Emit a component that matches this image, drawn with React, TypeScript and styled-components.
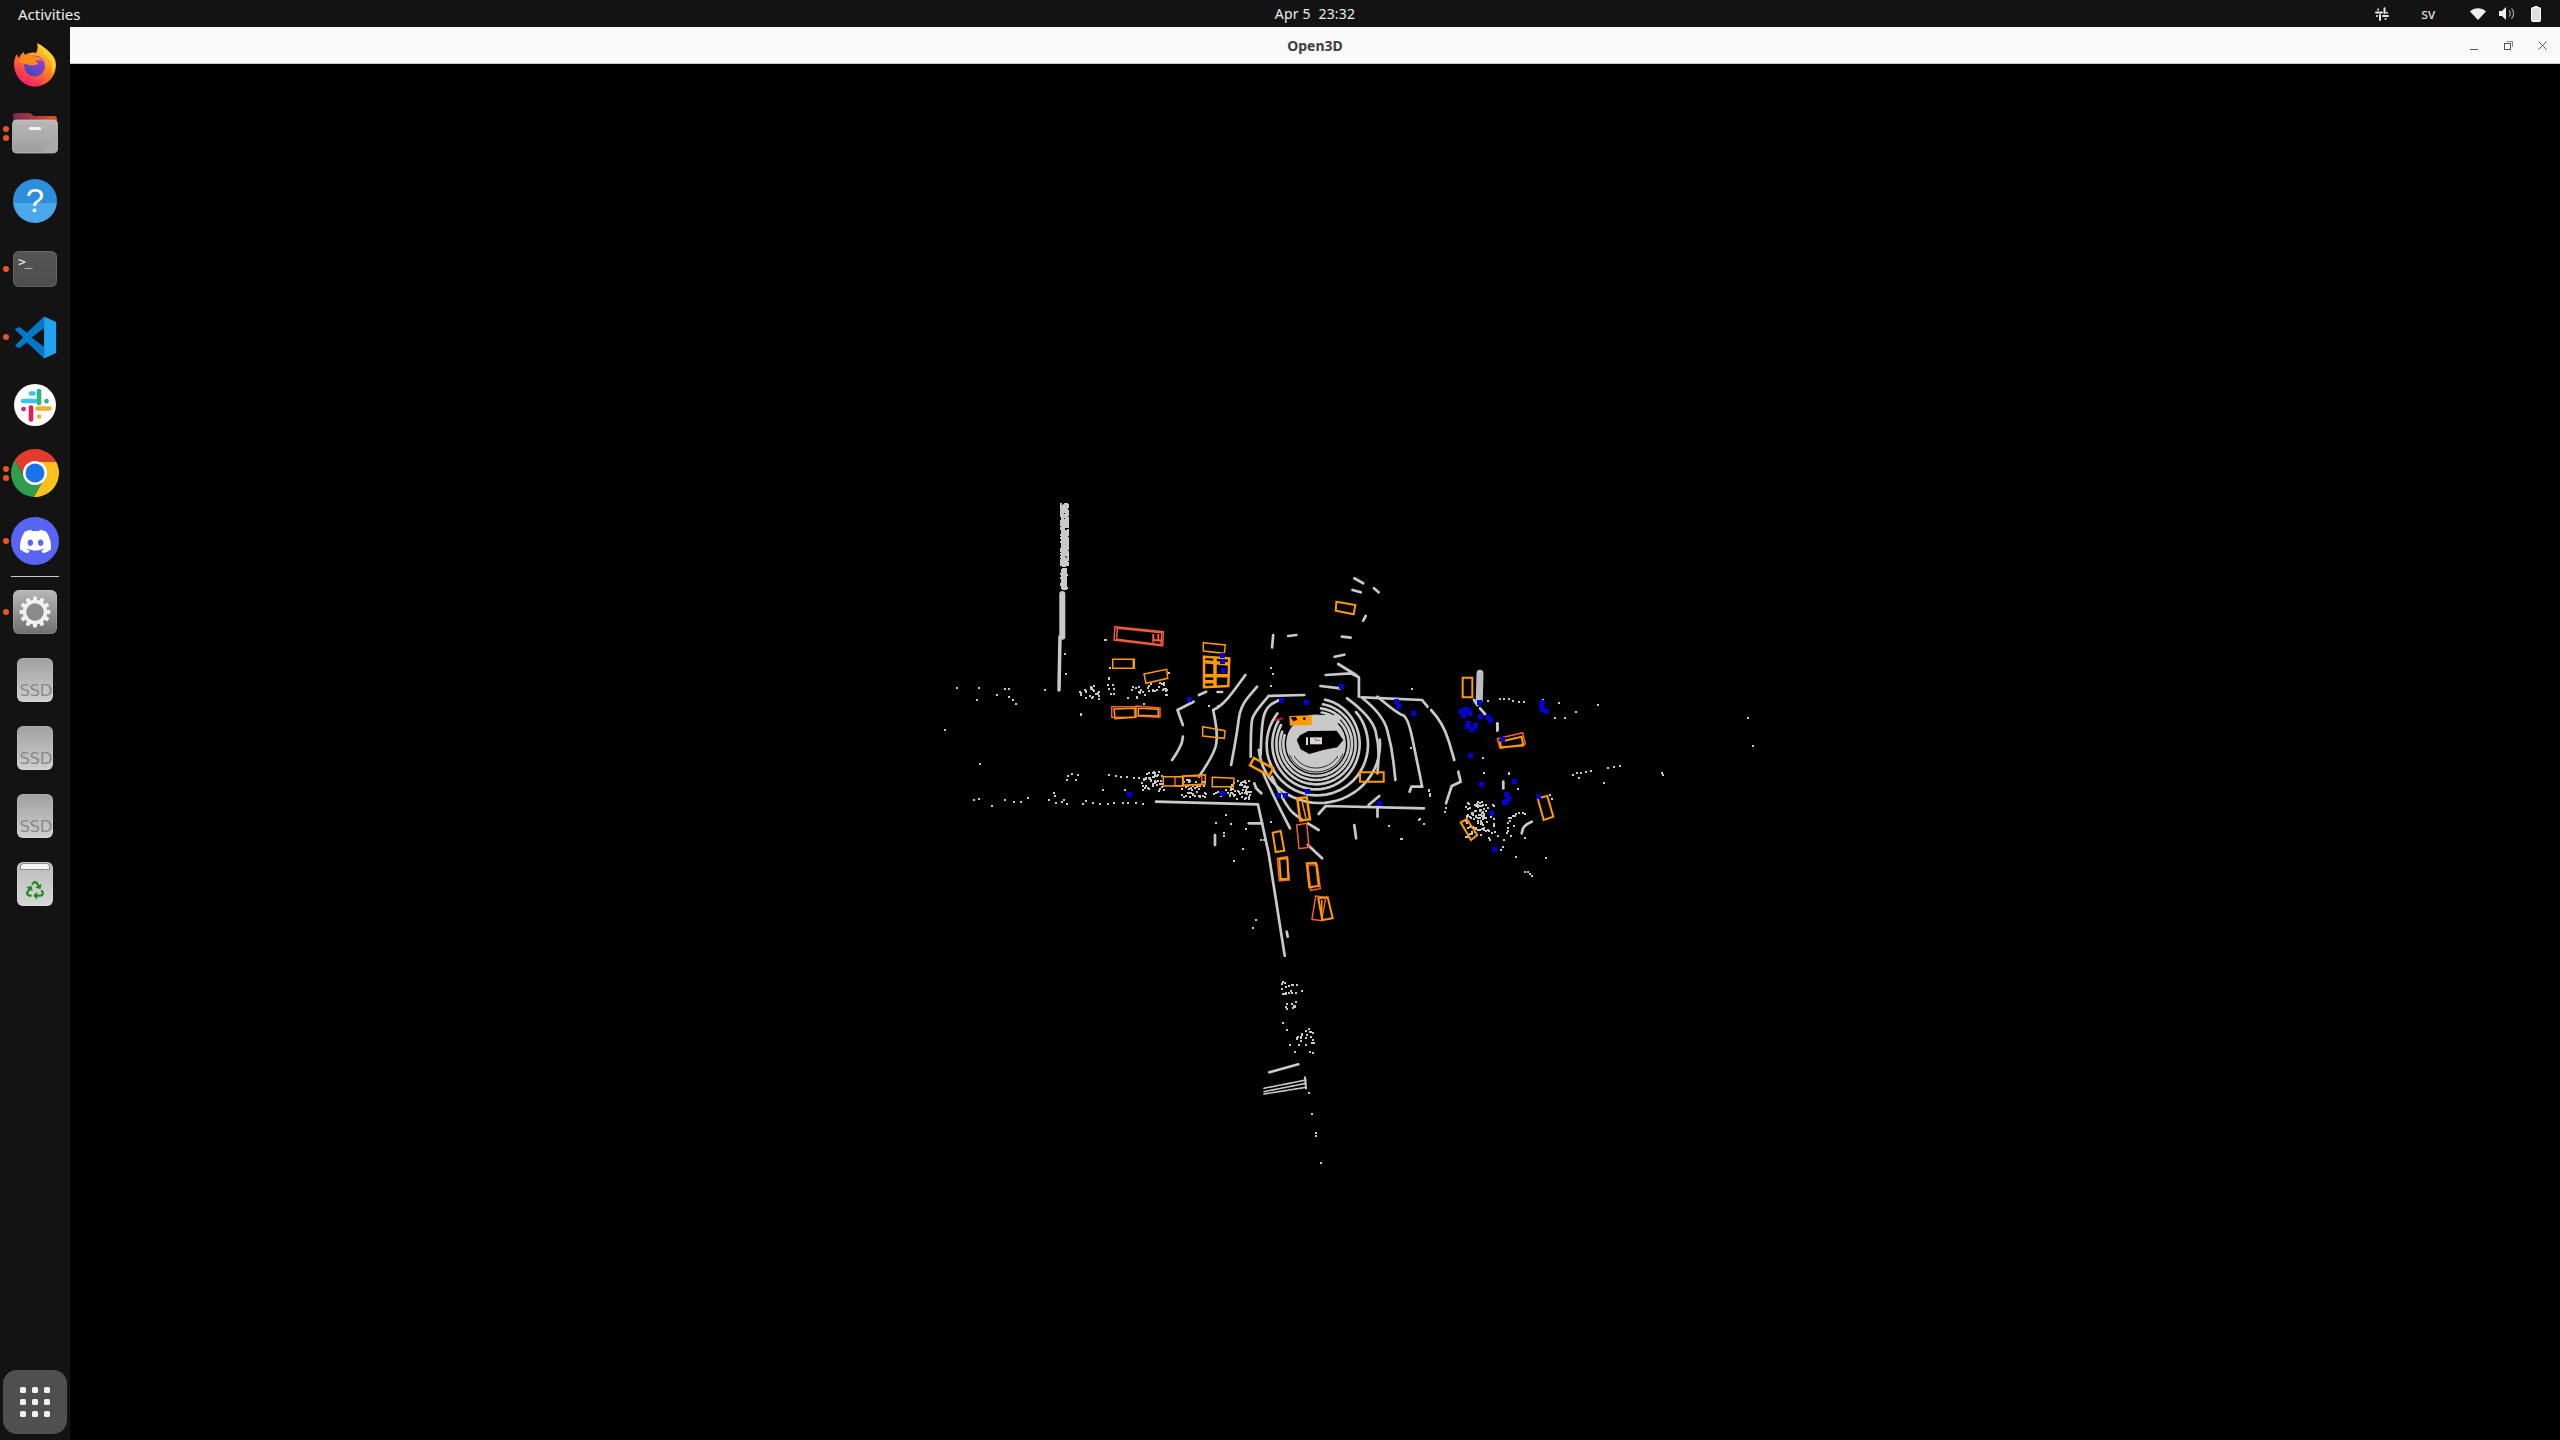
import React from "react";
import styled, { createGlobalStyle } from "styled-components";
import { SiDiscord } from "react-icons/si";
import { FaRecycle } from "react-icons/fa";

const Global = createGlobalStyle`
  html, body { margin: 0; padding: 0; background: #000; overflow: hidden; }
  #root { width: 100vw; height: 100vh; }
`;

const Root = styled.div`
  width: 100%; height: 100%;
  display: flex; flex-direction: column;
  background: #000;
`;
const TopBar = styled.header`
  flex: 0 0 27px; height: 27px;
  display: grid; grid-template-columns: 340px 1fr 270px; align-items: center;
  background: #131313; color: #eeeeec;
  font: 400 14px/26px "Noto Sans", sans-serif;
`;
const Activities = styled.span`
  padding-left: 18px; font-size: 15px;
`;
const Clock = styled.span`
  text-align: center; white-space: pre; letter-spacing: 0.2px;
`;
const Tray = styled.div`
  display: flex; align-items: center; justify-content: flex-end; padding-right: 19px;
`;
const TrayItem = styled.span<{ $gap: number }>`
  margin-left: ${(p) => p.$gap}px;
  display: flex; align-items: center;
  font-size: 14px;
`;
const Main = styled.div`
  flex: 1; display: flex; min-height: 0;
`;
const Dock = styled.nav`
  flex: 0 0 70px; width: 70px; background: #131313;
  display: flex; flex-direction: column; padding: 4px 0 6px; box-sizing: border-box;
`;
const DockItem = styled.div`
  position: relative; flex: 0 0 68px; height: 68px;
  display: flex; align-items: center; justify-content: center;
`;
const RunDots = styled.div`
  position: absolute; left: 3px; top: 0; bottom: 0;
  display: flex; flex-direction: column; justify-content: center; gap: 3px;
`;
const RunDot = styled.i`
  display: block; width: 6px; height: 6px; border-radius: 50%; background: #e95420;
`;
const Separator = styled.hr`
  flex: 0 0 1px; margin: 1px 11px 1px; height: 1px; width: 48px; border: 0; padding: 0;
  background: #c9c9c9;
`;
const Tile = styled.div<{ $w: number; $h: number; $from: string; $to: string }>`
  position: relative; width: ${(p) => p.$w}px; height: ${(p) => p.$h}px;
  border-radius: 6px; box-sizing: border-box;
  background: linear-gradient(${(p) => p.$from}, ${(p) => p.$to});
  box-shadow: inset 0 0 0 1px rgba(255,255,255,.12);
`;
const GearTile = styled(Tile)`
  display: flex; align-items: center; justify-content: center;
`;
const SsdTile = styled(Tile)`
  display: flex; align-items: flex-end; justify-content: flex-end;
  padding: 0 1px 1px 0;
`;
const SsdText = styled.span`
  font: 400 16.5px/20px "DejaVu Sans", sans-serif; color: #8a8a8a; letter-spacing: -.4px;
`;
const TrashTile = styled(Tile)`
  display: flex; align-items: flex-end; justify-content: center; padding-bottom: 7px;
  color: #238a23;
`;
const TrashSlot = styled.i`
  position: absolute; left: 4px; right: 4px; top: 2px; height: 5px;
  background: #f4f4f4; border-radius: 3px 3px 0 0;
  box-shadow: 0 0 0 1px #8d8d8d;
`;
const TerminalTile = styled(Tile)`
  color: #eee; font: 400 13px/13px "DejaVu Sans Mono", monospace;
  padding: 4px 0 0 5px; letter-spacing: -1px;
`;
const HelpCircle = styled.div`
  width: 44px; height: 44px; border-radius: 50%;
  background: linear-gradient(#2d8edb 0 54%, #4aa8ea 54% 100%);
  color: #fff; font: 400 33px/44px "Liberation Sans", sans-serif; text-align: center;
`;
const DiscordCircle = styled.div`
  width: 48px; height: 48px; border-radius: 50%; background: #5865f2; color: #fff;
  display: flex; align-items: center; justify-content: center;
`;
const GridButtonWrap = styled.div`
  margin-top: auto; display: flex; justify-content: center;
`;
const GridButton = styled.div`
  width: 64px; height: 64px; border-radius: 14px; background: #4f4f4f;
  display: grid; grid-template-columns: repeat(3, 6px); grid-auto-rows: 6px; gap: 6px;
  justify-content: center; align-content: center;
`;
const GridDot = styled.i`
  display: block; background: #f2f2f2; border-radius: 1.5px;
`;
const Window = styled.section`
  flex: 1; min-width: 0; display: flex; flex-direction: column; background: #000;
`;
const TitleBar = styled.div`
  flex: 0 0 37px; height: 37px; box-sizing: border-box;
  background: #fafafa; border-bottom: 1px solid #cfcfcf;
  display: grid; grid-template-columns: 1fr auto 1fr; align-items: center;
`;
const Title = styled.span`
  font: 700 14px "Noto Sans", sans-serif; color: #3d3d3d;
`;
const Controls = styled.div`
  display: flex; justify-content: flex-end; padding-right: 1px;
`;
const ControlButton = styled.span`
  width: 34px; height: 36px; display: flex; align-items: center; justify-content: center;
  color: #555;
`;
const Viewer = styled.div`
  flex: 1; min-height: 0; background: #000;
`;
const CloudSvg = styled.svg`
  display: block; width: 100%; height: 100%;
`;

/* ---------- icons ---------- */
const Firefox = () => (
  <svg width="44" height="44" viewBox="0 0 44 44">
    <defs>
      <linearGradient id="ffa" x1="0.8" y1="0" x2="0.2" y2="1">
        <stop offset="0" stopColor="#ffe13a" />
        <stop offset=".45" stopColor="#ff8a1c" />
        <stop offset=".8" stopColor="#ff3750" />
        <stop offset="1" stopColor="#f0148c" />
      </linearGradient>
      <linearGradient id="ffb" x1="0.7" y1="0" x2="0.3" y2="1">
        <stop offset="0" stopColor="#a23de0" />
        <stop offset="1" stopColor="#3f49b8" />
      </linearGradient>
    </defs>
    <path d="M1 21c0-4 1-7 3-10 .3 2 1 3 2 4 1-3 3-5 5-6 0 1 .3 2 1 3 3-2 7-3 11-2C25 7 25 3 24 0c5 3 8 5 12 9 4 3 7 7 7 13 0 12-9.500 21.500-21 21.500S1 33 1 21z" fill="url(#ffa)" />
    <path d="M26 1c5 3 12 8 15 15 2 5 1 11-2 15 1-6 0-12-5-17-3-3-7-8-8-13z" fill="#ffcf2e" />
    <circle cx="21.500" cy="23" r="10.500" fill="url(#ffb)" />
    <path d="M6 18c3-4 8-6 13-5 5 0 9 2 11 5-3-1-6-1-8 0 2 1 3 2 3 3-3 2-7 1-9 1-3-1-5-2-7-2-1 0-2-1-3-2z" fill="#ff8a1c" />
  </svg>
);
const Folder = () => (
  <svg width="46" height="42" viewBox="0 0 46 42">
    <defs>
      <linearGradient id="fdt" x1="0" y1="0" x2="1" y2="0">
        <stop offset="0" stopColor="#77294f" />
        <stop offset="1" stopColor="#e2501f" />
      </linearGradient>
      <linearGradient id="fdb" x1="0" y1="0" x2="0" y2="1">
        <stop offset="0" stopColor="#b8b8b8" />
        <stop offset="1" stopColor="#9e9e9e" />
      </linearGradient>
    </defs>
    <path d="M1 4a3 3 0 0 1 3-3h14l4 3h20a3 3 0 0 1 3 3v14H1z" fill="url(#fdt)" />
    <rect x="0.500" y="8" width="45" height="33" rx="4" fill="url(#fdb)" stroke="#cfcfcf" strokeWidth=".7" />
    <path d="M45 26v11a4 4 0 0 1-4 4H28z" fill="#aaa" />
    <rect x="17" y="15" width="12" height="3" rx="1" fill="#f2f2f2" />
  </svg>
);
const VSCode = () => (
  <svg width="43" height="43" viewBox="0 0 100 100">
    <path d="M70 1 98 14V86L70 99Z" fill="#23a2f1" />
    <path d="M70 1 30 39 12 25 2 31 21 50 2 69 12 75 30 61 70 99V72L41 50 70 28Z" fill="#0079c6" />
  </svg>
);
const Slack = () => (
  <svg width="42" height="42" viewBox="0 0 42 42">
    <circle cx="21" cy="21" r="21" fill="#fff" />
    <g strokeWidth="4.600" strokeLinecap="round" fill="none">
      <path d="M9 17h12" stroke="#36c5f0" />
      <path d="M17 9.500h2.500" stroke="#36c5f0" />
      <path d="M25 7v12" stroke="#2eb67d" />
      <path d="M32.500 17v.2" stroke="#2eb67d" />
      <path d="M17 23.500v12" stroke="#e01e5a" />
      <path d="M9.500 25h.1" stroke="#e01e5a" />
      <path d="M23.500 24.500h12" stroke="#ecb22e" />
      <path d="M25 32.500h.1" stroke="#ecb22e" />
    </g>
  </svg>
);
const Chrome = () => (
  <svg width="48" height="48" viewBox="0 0 48 48">
    <path d="M24 13H45.300A24 24 0 0 0 3.820 11.050L14.470 29.500Z" fill="#e33b2e" />
    <path d="M14.470 29.500 3.820 11.050A24 24 0 0 0 22.880 47.950L33.530 29.500Z" fill="#2f9e4c" />
    <path d="M33.530 29.500 22.880 47.950A24 24 0 0 0 45.300 13H24Z" fill="#fcc11c" />
    <circle cx="24" cy="24" r="12" fill="#fff" />
    <circle cx="24" cy="24" r="9.500" fill="#1a73e8" />
  </svg>
);
const Gear = () => (
  <svg width="32" height="32" viewBox="0 0 32 32">
    {Array.from({ length: 12 }, (_, i) => (
      <rect key={i} x="14" y="0.500" width="4" height="6" rx="1" fill="#f1f1ef" transform={`rotate(${i * 30} 16 16)`} />
    ))}
    <circle cx="16" cy="16" r="10.500" fill="#8b8b8b" stroke="#f1f1ef" strokeWidth="3.600" />
  </svg>
);
const TraySlack = () => (
  <svg width="14" height="14" viewBox="0 0 14 14" fill="none" stroke="#e8e8e8" strokeWidth="2" strokeLinecap="round">
    <path d="M1 5.500h6M9.500 1.200v5M8 9h5M5 8v5M11.800 5.800h.1M3 2.500h.1M2 9h.1M10.500 12h.1" />
  </svg>
);
const Wifi = () => (
  <svg width="16" height="12" viewBox="0 0 16 12"><path d="M0 3.500C4.500-.8 11.500-.8 16 3.500L8 12Z" fill="#f0f0f0" /></svg>
);
const Volume = () => (
  <svg width="15" height="13" viewBox="0 0 15 13">
    <path d="M0 4h3l4-4v13L3 9H0Z" fill="#eee" />
    <path d="M10 3.500a4 4 0 0 1 0 6M12.500 1.500a7 7 0 0 1 0 10" fill="none" stroke="#aaa" strokeWidth="1.100" />
  </svg>
);
const Battery = () => (
  <svg width="10" height="16" viewBox="0 0 10 16">
    <rect x="3" y="0" width="4" height="2" fill="#eee" />
    <rect x="0.600" y="1.600" width="8.800" height="13.800" rx="1.500" fill="#ddd" stroke="#fff" strokeWidth="1.100" />
  </svg>
);

/* ---------- point cloud data: each block is read in the pixel frame of a crop ---------- */
type Frame = { ox: number; oy: number; sx: number; sy: number };
const Z4: Frame = { ox: 1040, oy: 560, sx: 2.8, sy: 3 };
const Z5: Frame = { ox: 900, oy: 480, sx: 3, sy: 3 };
const Z6: Frame = { ox: 1400, oy: 640, sx: 3, sy: 3 };
const Z7: Frame = { ox: 1180, oy: 780, sx: 3, sy: 3 };
const Z9: Frame = { ox: 1240, oy: 660, sx: 3, sy: 3 };

const mapPts = (f: Frame, n: number[]) => {
  const out: [number, number][] = [];
  for (let i = 0; i < n.length; i += 2) out.push([f.ox + n[i] / f.sx, f.oy + n[i + 1] / f.sy]);
  return out;
};
const poly = (f: Frame, n: number[], close = false) =>
  mapPts(f, n).map(([x, y], i) => `${i ? "L" : "M"}${x.toFixed(1)} ${y.toFixed(1)}`).join("") + (close ? "Z" : "");
const curve = (f: Frame, n: number[]) => {
  const p = mapPts(f, n);
  let d = `M${p[0][0].toFixed(1)} ${p[0][1].toFixed(1)}`;
  for (let i = 1; i < p.length - 1; i++) {
    const mx = (p[i][0] + p[i + 1][0]) / 2;
    const my = (p[i][1] + p[i + 1][1]) / 2;
    d += `Q${p[i][0].toFixed(1)} ${p[i][1].toFixed(1)} ${mx.toFixed(1)} ${my.toFixed(1)}`;
  }
  const l = p[p.length - 1];
  return d + `L${l[0].toFixed(1)} ${l[1].toFixed(1)}`;
};
const squares = (f: Frame, n: number[], s: number) =>
  mapPts(f, n).map(([x, y]) => `M${Math.round(x - s / 2)} ${Math.round(y - s / 2)}h${s}v${s}h-${s}z`).join("");

const arc = (cx: number, cy: number, rx: number, ry: number, a0: number, a1: number) => {
  const n: number[] = [];
  for (let a = a0; a <= a1; a += 6) {
    const t = (a * Math.PI) / 180;
    n.push(cx + rx * Math.cos(t), cy + ry * Math.sin(t));
  }
  return n;
};

let seed = 41;
const rnd = () => {
  seed = (seed * 16807) % 2147483647;
  return seed / 2147483647;
};
const cluster = (x0: number, y0: number, x1: number, y1: number, count: number) => {
  const n: number[] = [];
  for (let i = 0; i < count; i++) n.push(x0 + rnd() * (x1 - x0), y0 + rnd() * (y1 - y0));
  return n;
};

const thick25 = [
  curve(Z4, [535, 615, 552, 520, 560, 440, 608, 380]),
  curve(Z4, [590, 590, 590, 490, 600, 460, 640, 408]),
  poly(Z4, [640, 408, 740, 405]),
  curve(Z4, [618, 585, 620, 490, 635, 440, 670, 420]),
  curve(Z4, [445, 650, 490, 580, 497, 520, 485, 450]),
  curve(Z4, [485, 450, 510, 440, 575, 345]),
  curve(Z4, [370, 600, 395, 560, 400, 530]),
  poly(Z4, [400, 495, 385, 450, 430, 425]),
  poly(Z4, [445, 405, 465, 395]), poly(Z4, [497, 396, 510, 396]),
  poly(Z4, [600, 670, 605, 685, 620, 700]),
  curve(Z4, [625, 640, 650, 700, 700, 805]),
  curve(Z4, [650, 650, 690, 745, 735, 780]),
  poly(Z4, [585, 790, 622, 790]),
  poly(Z4, [490, 825, 490, 855]),
  poly(Z4, [750, 790, 780, 810]),
  poly(Z4, [750, 855, 790, 895]),
  poly(Z4, [880, 795, 885, 835]),
  poly(Z4, [650, 262, 653, 225]),
  poly(Z4, [695, 228, 718, 225]),
  poly(Z4, [825, 290, 852, 284]),
  poly(Z4, [880, 55, 905, 70]), poly(Z4, [875, 90, 898, 97]), poly(Z4, [935, 85, 948, 97]),
  poly(Z4, [845, 230, 870, 233]), poly(Z4, [905, 182, 912, 168]),
  curve(Z4, [945, 410, 1000, 460, 1030, 470, 1055, 600, 1070, 680]),
  poly(Z4, [1070, 680, 1040, 680, 1035, 695]),
  curve(Z4, [900, 412, 960, 462, 985, 560, 995, 660]),
  curve(Z4, [860, 415, 930, 470, 950, 560, 945, 640]),
  curve(Z4, [1095, 450, 1130, 490, 1160, 600]),
  poly(Z4, [905, 412, 1070, 420, 1085, 440]),
  poly(Z4, [780, 762, 800, 738, 1075, 745]),
  poly(Z4, [945, 740, 945, 770]),
  poly(Z4, [920, 735, 950, 708]),
  poly(Z4, [325, 725, 610, 733, 640, 880, 685, 1185]),
  poly(Z4, [800, 345, 870, 340, 893, 352, 893, 410]),
  poly(Z4, [785, 378, 840, 385]),
  poly(Z4, [835, 312, 885, 345]),
  poly(Z6, [175, 395, 182, 425, 155, 438, 138, 490]),
  poly(Z6, [310, 425, 310, 445]),
  curve(Z6, [395, 545, 372, 555, 365, 580]),
  poly(Z6, [240, 205, 255, 222]),
  poly(Z6, [222, 180, 232, 195]),
  poly(Z6, [292, 250, 292, 272]),
  poly(Z7, [268, 877, 355, 853]),
  poly(Z7, [320, 455, 323, 470]),
];
const rings = [
  arc(228, 252, 98, 96, -80, 200),
  arc(228, 252, 108, 108, -82, 205),
  arc(228, 252, 119, 121, -80, 210),
  arc(228, 252, 131, 136, -78, 214),
  arc(232, 254, 152, 152, -40, 218),
  arc(238, 254, 182, 175, -5, 175),
];
const ringPaths = rings.map((r) => poly(Z9, r));

const hairlines = [
  arc(228, 252, 86, 84, 20, 160),
  arc(228, 252, 76, 72, 30, 150),
].map((r) => poly(Z9, r));

const hole = poly(Z9, [170, 240, 180, 226, 205, 213, 290, 212, 310, 240, 292, 262, 250, 270, 208, 282, 182, 268], true);

const greyDots = [
  ...mapPts(Z5, [
    218, 957, 233, 955, 272, 975, 312, 958, 338, 963, 360, 963, 380, 952, 445, 958, 460, 935, 462, 945, 465, 965, 483, 963, 490, 958, 497, 968,
    545, 968, 555, 960, 575, 965, 597, 968, 620, 968, 640, 965, 665, 965, 680, 965, 705, 965, 725, 970,
    500, 885, 497, 897, 513, 878, 530, 882, 525, 897, 625, 883, 645, 886, 660, 887, 678, 887, 700, 890, 715, 890, 605, 927, 673, 927,
    237, 849, 131, 746, 540, 701, 169, 620, 234, 622, 311, 624, 325, 624, 287, 643, 323, 648, 227, 658, 335, 658, 344, 668, 431, 628,
    613, 476, 627, 560, 625, 595, 495, 578, 493, 520, 729, 670, 680, 652, 805, 577, 622, 612, 635, 612, 625, 625, 638, 625, 630, 638, 640, 638,
    925, 675, 950, 675, 1110, 560, 1115, 578, 1110, 615,
  ]),
  ...mapPts(Z5, cluster(480, 70, 502, 255, 520)),
  ...mapPts(Z5, cluster(481, 264, 497, 325, 130)),
  ...mapPts(Z5, cluster(530, 615, 595, 655, 22)),
  ...mapPts(Z5, cluster(690, 615, 745, 650, 16)),
  ...mapPts(Z5, cluster(750, 600, 800, 645, 18)),
  ...mapPts(Z5, cluster(722, 872, 785, 930, 50)),
  ...mapPts(Z5, cluster(845, 895, 910, 948, 36)),
  ...mapPts(Z5, cluster(985, 900, 1050, 955, 48)),
  ...mapPts(Z5, cluster(760, 925, 1000, 950, 18)),
  ...mapPts(Z6, [
    32, 145, 297, 174, 310, 175, 323, 175, 337, 180, 353, 184, 369, 184, 427, 177, 475, 185, 591, 192, 525, 214, 462, 230, 493, 232,
    1042, 232, 1056, 315, 246, 352, 250, 395, 324, 398, 352, 443, 516, 403, 528, 397, 541, 397, 555, 393, 571, 391, 535, 410, 610, 425, 620, 381, 638, 378, 656, 374,
    784, 397, 786, 402, 85, 448, 88, 464, 448, 462, 452, 475, 55, 538, 68, 550, 133, 513, 135, 500, 282, 572, 290, 584, 308, 596, 306, 618, 300, 627, 344, 647, 434, 652, 372, 590,
    372, 693, 380, 693, 388, 698, 392, 706, 292, 258, 262, 180,
  ]),
  ...mapPts(Z6, cluster(195, 480, 250, 590, 80)),
  ...mapPts(Z6, cluster(240, 490, 285, 600, 20)),
  ...mapPts(Z6, [318, 575, 320, 560, 322, 545, 325, 532, 335, 525, 345, 520, 355, 515, 365, 515, 372, 520, 330, 585, 338, 555, 326, 540, 330, 530, 342, 525, 320, 570]),
  ...mapPts(Z7, [
    105, 125, 135, 102, 150, 130, 130, 155, 128, 165, 187, 203, 195, 145, 160, 240, 270, 122, 240, 178, 248, 178, 226, 418, 216, 441, 312, 524,
    520, 136, 625, 135, 660, 175, 714, 118, 730, 130, 745, 28, 747, 44,
    305, 725, 318, 747, 328, 793, 343, 813, 355, 793, 376, 793, 392, 785, 392, 1000, 405, 1055, 405, 1065, 420, 1145, 384, 935, 386, 812, 396, 815,
  ]),
  ...mapPts(Z7, cluster(298, 603, 365, 640, 18)),
  ...mapPts(Z7, cluster(295, 640, 350, 692, 10)),
  ...mapPts(Z7, cluster(345, 745, 400, 785, 18)),
  ...mapPts(Z4, [11, 388, 113, 460, 181, 236, 193, 321, 190, 352, 1040, 385, 1035, 560, 1085, 690, 1090, 700, 1060, 775, 1072, 790, 975, 795, 1010, 835, 1280, 505, 1240, 635, 1310, 637, 1280, 490]),
];
const greyDotPath = greyDots.map(([x, y]) => `M${Math.round(x)} ${Math.round(y)}h2v2h-2z`).join("");

const orange = [
  [Z5, [638, 538, 703, 538, 703, 565, 638, 565]],
  [Z5, [732, 582, 800, 568, 803, 595, 738, 610]],
  [Z5, [910, 488, 976, 495, 973, 520, 910, 513]],
  [Z5, [642, 687, 705, 685, 705, 712, 645, 716]],
  [Z5, [715, 685, 775, 688, 775, 708, 715, 706]],
  [Z5, [908, 740, 975, 752, 973, 775, 908, 768]],
  [Z5, [790, 890, 850, 890, 850, 918, 790, 918]],
  [Z5, [848, 888, 916, 884, 916, 912, 848, 916]],
  [Z5, [937, 892, 1002, 895, 1000, 920, 937, 920]],
  [Z5, [912, 530, 988, 535, 985, 618, 912, 622]],
  [Z5, [1062, 834, 1120, 865, 1108, 887, 1050, 856]],
  [Z9, [360, 337, 431, 337, 431, 365, 360, 365]],
  [Z9, [172, 415, 200, 412, 210, 478, 181, 482]],
  [Z7, [278, 158, 302, 153, 313, 212, 287, 216]],
  [Z7, [298, 237, 322, 235, 325, 296, 302, 298]],
  [Z7, [380, 250, 408, 248, 416, 318, 388, 322]],
  [Z7, [415, 355, 443, 352, 458, 415, 427, 420]],
  [Z6, [188, 113, 217, 113, 217, 172, 188, 172]],
  [Z6, [300, 305, 365, 290, 370, 317, 303, 322]],
  [Z6, [413, 475, 442, 468, 460, 530, 431, 540]],
  [Z6, [182, 547, 200, 537, 232, 585, 213, 600]],
  [Z4, [830, 125, 883, 135, 878, 163, 828, 152]],
] as [Frame, number[]][];
const red = [
  [Z5, [645, 440, 790, 455, 788, 498, 642, 480]],
  [Z5, [652, 445, 785, 458, 783, 494, 650, 478]],
  [Z5, [635, 680, 708, 680, 708, 712, 635, 712]],
  [Z5, [708, 678, 780, 684, 780, 712, 708, 708]],
  [Z5, [825, 890, 905, 888, 905, 915, 825, 918]],
  [Z7, [350, 135, 380, 130, 387, 202, 357, 206]],
  [Z7, [292, 235, 322, 230, 328, 300, 298, 303]],
  [Z7, [384, 255, 412, 255, 421, 326, 392, 331]],
  [Z7, [407, 348, 437, 352, 425, 422, 396, 418]],
  [Z6, [292, 296, 368, 278, 376, 312, 300, 325]],
] as [Frame, number[]][];
const orangeLines = [
  poly(Z5, [945, 535, 945, 620]),
  poly(Z5, [915, 545, 985, 552]),
  poly(Z5, [915, 587, 985, 587]),
  poly(Z5, [915, 605, 945, 605]),
  poly(Z5, [700, 540, 700, 563]),
  poly(Z7, [365, 60, 378, 115]),
  poly(Z7, [425, 360, 425, 418]),
];
const redLines = [
  poly(Z5, [760, 462, 760, 488]),
  poly(Z5, [760, 480, 785, 482]),
  poly(Z5, [775, 462, 775, 480]),
];
const blue = squares(Z6, [
  185, 215, 195, 208, 205, 212, 190, 225, 208, 220, 205, 250, 225, 257, 218, 267, 202, 258, 240, 230, 265, 232, 272, 242,
  427, 187, 425, 195, 428, 207, 440, 215, 210, 347, 308, 298, 243, 433, 342, 424, 318, 462, 325, 475, 320, 483, 312, 488, 415, 470, 273, 520, 284, 627, 237, 187,
], 5) + squares(Z4, [
  418, 418, 675, 420, 745, 428, 997, 425, 1005, 438, 1045, 460, 750, 695, 668, 705, 687, 707, 510, 700, 250, 702, 950, 730,
  512, 305, 515, 330, 512, 285, 843, 380, 1204, 586, 1235, 672, 1328, 663,
], 5);

const Cloud = () => (
  <CloudSvg viewBox="70 64 2490 1376" preserveAspectRatio="xMinYMin slice">
    <g fill="none" stroke="#c9c9c9" strokeWidth="2.700" strokeLinejoin="round" strokeLinecap="round">
      {thick25.map((d, i) => <path key={i} d={d} />)}
      {ringPaths.map((d, i) => <path key={i} d={d} />)}
      <path d={poly(Z5, [487, 342, 487, 470])} strokeWidth="6" />
      <path d={poly(Z5, [480, 470, 477, 630])} strokeWidth="3.500" />
      <path d={poly(Z6, [240, 100, 238, 180])} strokeWidth="7" stroke="#bdbdbd" />
      <path d={poly(Z7, [252, 925, 378, 900])} strokeWidth="1.600" strokeDasharray="5 1" />
      <path d={poly(Z7, [252, 935, 378, 910])} strokeWidth="1.600" strokeDasharray="7 1" />
      <path d={poly(Z7, [252, 942, 378, 922])} strokeWidth="1.600" strokeDasharray="4 1" />
      <path d={poly(Z7, [375, 892, 378, 925])} strokeWidth="2" />
    </g>
    <ellipse cx={Z9.ox + 228 / 3} cy={Z9.oy + 252 / 3} rx="30" ry="29.500" fill="#c9c9c9" />
    <path d={poly(Z9, [205, 165, 300, 165, 300, 190, 205, 190], true)} fill="#c9c9c9" />
    <g fill="none" stroke="#000" strokeWidth=".8">
      {hairlines.map((d, i) => <path key={i} d={d} />)}
    </g>
    <path d={hole} fill="#000" />
    <path d={poly(Z9, [210, 232, 246, 232, 246, 253, 210, 253], true)} fill="#d8d8d8" />
    <path d={poly(Z9, [198, 232, 204, 232, 204, 255, 198, 255], true)} fill="#d8d8d8" />
    <path d={poly(Z9, [226, 241, 240, 241])} stroke="#d0504a" strokeWidth="1" />
    <path d={poly(Z9, [226, 241, 226, 230])} stroke="#4aa060" strokeWidth="1" />
    <path d={greyDotPath} fill="#c9c9c9" />
    <g fill="none" stroke="#ef5f3c" strokeWidth="1.500">
      {red.map(([f, n], i) => <path key={i} d={poly(f, n, true)} />)}
      {redLines.map((d, i) => <path key={i} d={d} strokeWidth="2" />)}
      <path d={poly(Z9, [105, 180, 130, 175])} stroke="#c8102e" strokeWidth="2" />
    </g>
    <g fill="none" stroke="#ff9a00" strokeWidth="1.500">
      {orange.map(([f, n], i) => (
        <path key={i} d={poly(f, n, true)} strokeWidth={i === 9 || i === 10 || i === 12 ? 2.500 : i > 9 ? 2 : 1.500} />
      ))}
      {orangeLines.map((d, i) => <path key={i} d={d} strokeWidth={i < 4 ? 3.500 : 1.500} />)}
    </g>
    <path d={poly(Z9, [148, 168, 215, 166, 215, 195, 150, 197], true)} fill="#ff9a00" />
    <path d={poly(Z9, [152, 172, 168, 170, 172, 180, 160, 184], true) + poly(Z9, [190, 172, 196, 172, 196, 180, 190, 180], true)} fill="#000" />
    <path d={blue} fill="#0000d8" />
  </CloudSvg>
);

const dockApps: { id: string; run: number; node: React.ReactNode }[] = [
  { id: "firefox", run: 0, node: <Firefox /> },
  { id: "files", run: 2, node: <Folder /> },
  { id: "help", run: 0, node: <HelpCircle>?</HelpCircle> },
  { id: "terminal", run: 1, node: <TerminalTile $w={44} $h={36} $from="#555" $to="#4d4d4d">&gt;_</TerminalTile> },
  { id: "vscode", run: 1, node: <VSCode /> },
  { id: "slack", run: 0, node: <Slack /> },
  { id: "chrome", run: 2, node: <Chrome /> },
  { id: "discord", run: 1, node: <DiscordCircle><SiDiscord size={31} /></DiscordCircle> },
];
const Running = ({ n }: { n: number }) =>
  n ? <RunDots>{Array.from({ length: n }, (_, i) => <RunDot key={i} />)}</RunDots> : null;

export default function App() {
  return (
    <Root>
      <Global />
      <TopBar>
        <Activities>Activities</Activities>
        <Clock>Apr 5  23:32</Clock>
        <Tray>
          <TrayItem $gap={0}><TraySlack /></TrayItem>
          <TrayItem $gap={32}>sv</TrayItem>
          <TrayItem $gap={35}><Wifi /></TrayItem>
          <TrayItem $gap={13}><Volume /></TrayItem>
          <TrayItem $gap={17}><Battery /></TrayItem>
        </Tray>
      </TopBar>
      <Main>
        <Dock>
          {dockApps.map((a) => (
            <DockItem key={a.id}><Running n={a.run} />{a.node}</DockItem>
          ))}
          <Separator />
          <DockItem>
            <Running n={1} />
            <GearTile $w={44} $h={44} $from="#b8b8b8" $to="#6f6f6f"><Gear /></GearTile>
          </DockItem>
          {[0, 1, 2].map((i) => (
            <DockItem key={i}>
              <SsdTile $w={36} $h={44} $from="#a0a0a0" $to="#d0d0d0"><SsdText>SSD</SsdText></SsdTile>
            </DockItem>
          ))}
          <DockItem>
            <TrashTile $w={36} $h={44} $from="#bdbdbd" $to="#d6d6d6"><TrashSlot /><FaRecycle size={18} /></TrashTile>
          </DockItem>
          <GridButtonWrap>
            <GridButton>{Array.from({ length: 9 }, (_, i) => <GridDot key={i} />)}</GridButton>
          </GridButtonWrap>
        </Dock>
        <Window>
          <TitleBar>
            <span />
            <Title>Open3D</Title>
            <Controls>
              <ControlButton><svg width="9" height="9" viewBox="0 0 9 9"><path d="M0 8.500h8" stroke="#555" strokeWidth="1" /></svg></ControlButton>
              <ControlButton><svg width="9" height="9" viewBox="0 0 9 9" fill="none" stroke="#555"><rect x=".5" y="2.500" width="6" height="6" /><path d="M3 .5h5.500V6" strokeWidth=".7" /></svg></ControlButton>
              <ControlButton><svg width="9" height="9" viewBox="0 0 9 9"><path d="M.5.5l8 8M8.500.5l-8 8" stroke="#555" strokeWidth="1" /></svg></ControlButton>
            </Controls>
          </TitleBar>
          <Viewer><Cloud /></Viewer>
        </Window>
      </Main>
    </Root>
  );
}
